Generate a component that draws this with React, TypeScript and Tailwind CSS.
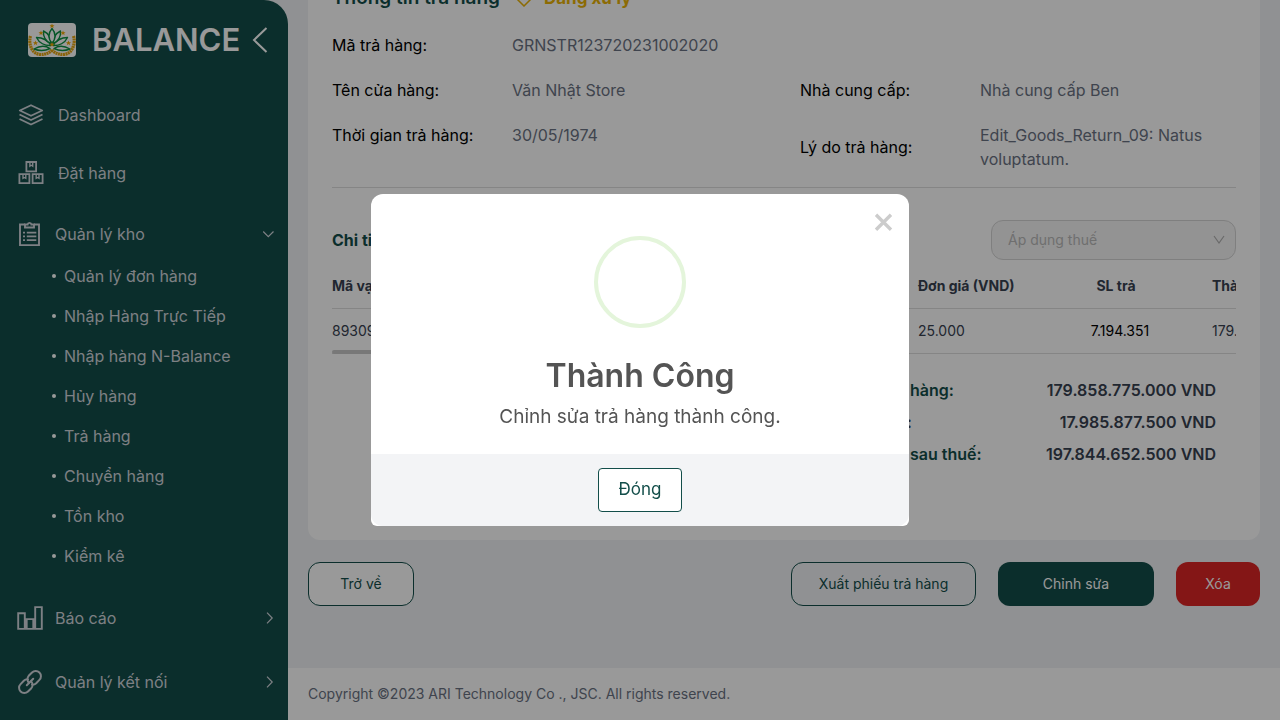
import type { ReactNode } from "react";

const stockLinks = [
  "Quản lý đơn hàng",
  "Nhập Hàng Trực Tiếp",
  "Nhập hàng N-Balance",
  "Hủy hàng",
  "Trả hàng",
  "Chuyển hàng",
  "Tồn kho",
  "Kiểm kê",
];

const totals = [
  { label: "Tổng tiền hàng:", value: "179.858.775.000 VND", tone: "text-[#134e4a]" },
  { label: "Tiền thuế:", value: "17.985.877.500 VND", tone: "text-[#374151]" },
  { label: "Tổng tiền sau thuế:", value: "197.844.652.500 VND", tone: "text-[#134e4a]" },
];

function Star({ x, y }: { x: number; y: number }) {
  return (
    <path
      transform={`translate(${x} ${y})`}
      d="M0-2.6.7-.8 2.5-.8 1.1.4 1.6 2.2 0 1.1-1.6 2.2-1.1.4-2.5-.8-.7-.8Z"
      fill="#f0a800"
    />
  );
}

function Logo() {
  return (
    <svg viewBox="0 0 48 34" className="h-[34px] w-12 shrink-0" aria-hidden="true">
      <rect width="48" height="34" rx="4" fill="#fff" />
      <g fill="none" stroke="#e5a512" strokeWidth="3.200" strokeDasharray="2 .5">
        <path d="M2.500 13C0 21 4 31.500 13 31.500c4.500 0 8-1.500 11-4.500" />
        <path d="M45.500 13c2.500 8-1.500 18.500-10.500 18.500-4.500 0-8-1.500-11-4.500" />
      </g>
      <g fill="#fff" stroke="#0c8f43" strokeWidth="1.4" strokeLinejoin="round">
        <path d="M22 25.500c-5 2.500-11 2.500-16 .5 5-3 11-4 16-.5Z" />
        <path d="M26 25.500c5 2.500 11 2.500 16 .5-5-3-11-4-16-.5Z" />
        <path d="M23 22.500C17 23 11 20 8.500 14.500c6 0 11 2.500 14.500 8Z" />
        <path d="M25 22.500c6 .5 12-2.500 14.500-8-6 0-11 2.500-14.500 8Z" />
        <path d="M23 20.500c-5-2-8-6.500-7.500-12.500 5 2.500 7.500 7 7.500 12.500Z" />
        <path d="M25 20.500c5-2 8-6.500 7.500-12.500-5 2.500-7.500 7-7.500 12.500Z" />
        <path d="M24 20c-4-4-4-10 0-14.500 4 4.500 4 10.500 0 14.500Z" />
      </g>
      <Star x={24} y={3} />
      <Star x={13} y={10} />
      <Star x={35} y={10} />
      <Star x={7.500} y={20} />
      <Star x={40.500} y={20} />
      <Star x={24} y={21.500} />
    </svg>
  );
}

function LayersIcon() {
  return (
    <svg viewBox="0 0 26 26" className="size-[26px]" fill="none" stroke="currentColor" strokeWidth="1.8" strokeLinejoin="round" aria-hidden="true">
      <path d="M13 3.200 24.200 8.500 13 13.800 1.800 8.500Z" />
      <path d="M1.500 12.500 13 18l11.500-5.500" />
      <path d="M1.500 17 13 22.500 24.500 17" />
    </svg>
  );
}

function BoxesIcon() {
  return (
    <svg viewBox="0 0 26 26" className="size-[26px]" fill="none" stroke="currentColor" strokeWidth="1.8" aria-hidden="true">
      <path d="M8.400 2h9.700v9.400H8.400ZM1.400 14.100h10v9h-10ZM14.600 14.100h10v9h-10Z" />
      <path fill="currentColor" stroke="none" d="M11.200 2.500h4.200v5l-2.100-1.400-2.100 1.400ZM4.300 14.600h4.200v5l-2.100-1.400-2.100 1.400ZM17.500 14.600h4.200v5l-2.100-1.400-2.100 1.400Z" />
      <path fill="#134e4a" stroke="none" d="M12.600 2.900h1.400v1.900h-1.400ZM5.700 15h1.400v1.900H5.700ZM18.900 15h1.400v1.900h-1.400Z" />
    </svg>
  );
}

function ClipboardIcon() {
  return (
    <svg viewBox="0 0 24 26" className="h-[26px] w-6" fill="none" stroke="currentColor" strokeWidth="1.9" aria-hidden="true">
      <path d="M8 3.500H3v20.600h19V3.500h-5" />
      <path d="M8 3.500h2.600C10.800 1.300 14.200 1.300 14.400 3.500H17v3H8Z" />
      <path strokeWidth="1.8" d="M6 11.700h2M9.800 11.700h9.500M6 15.400h2M9.800 15.400h9.500M6 19.100h2M9.800 19.100h9.500" />
    </svg>
  );
}

function BarsIcon() {
  return (
    <svg viewBox="0 0 26 26" className="size-[26px]" fill="none" stroke="currentColor" strokeWidth="1.9" aria-hidden="true">
      <path d="M1.200 8.200h6.600v15.700H1.200ZM9.700 14.100h6.600v9.800H9.700ZM18.200 2.100h6.600v21.800h-6.600Z" />
    </svg>
  );
}

function LinkIcon() {
  return (
    <svg viewBox="0 0 26 26" className="size-[26px]" fill="none" stroke="currentColor" strokeWidth="2" strokeLinecap="round" aria-hidden="true">
      <path d="M12 13.800a5.200 5.200 0 0 1-.3-7L15 3.500a5.200 5.200 0 0 1 7.400 7.400l-3.200 3.300a5.200 5.200 0 0 1-4.200 1.400" />
      <path d="M14 12.200a5.200 5.200 0 0 1 .3 7L11 22.500a5.200 5.200 0 0 1-7.400-7.400l3.200-3.300A5.200 5.200 0 0 1 11 10.400" />
      <path d="m9.800 16.200 6.400-6.400" />
    </svg>
  );
}

function Chevron({ className, d }: { className: string; d: string }) {
  return (
    <svg viewBox="0 0 12 12" className={className} fill="none" stroke="currentColor" strokeWidth="1.2" aria-hidden="true">
      <path d={d} />
    </svg>
  );
}

const DOWN = "M.2 3.500 5.300 8.700l5.200-5.200";
const RIGHT = "M4 .7 9.200 6 4 11.300";

function NavGroup({ icon, label, arrow, className }: { icon: ReactNode; label: string; arrow: string; className: string }) {
  return (
    <button type="button" className={`flex h-11 w-full items-center pr-[13px] pl-[17px] text-left ${className}`}>
      <span className="flex w-[38px]">{icon}</span>
      <span className="flex-1">{label}</span>
      <Chevron className="size-3" d={arrow} />
    </button>
  );
}

function Sidebar() {
  return (
    <aside className="h-full w-72 shrink-0 overflow-hidden rounded-tr-3xl bg-[#134e4a] text-gray-300">
      <div className="flex h-20 items-center pl-7 text-white">
        <Logo />
        <span className="ml-4 w-[158px] text-[31px] font-semibold">BALANCE</span>
        <button type="button" aria-label="Thu gọn menu">
          <svg viewBox="0 0 18 28" className="h-7 w-[18px]" fill="none" stroke="currentColor" strokeWidth="2" aria-hidden="true">
            <path d="M16.500 2 4 14l12.500 12" />
          </svg>
        </button>
      </div>
      <nav className="pt-[6px]">
        <a href="#dashboard" className="flex h-[58px] items-center gap-[14px] pl-[18px]">
          <LayersIcon />
          Dashboard
        </a>
        <a href="#orders" className="flex h-[58px] items-center gap-[14px] pl-[18px]">
          <BoxesIcon />
          Đặt hàng
        </a>
        <NavGroup icon={<ClipboardIcon />} label="Quản lý kho" arrow={DOWN} className="mt-[10px]" />
        <ul>
          {stockLinks.map((label) => (
            <li key={label}>
              <a href="#stock" className="flex h-10 items-center gap-2 pl-[52px]">
                <span className="size-1 rounded-full bg-white" />
                {label}
              </a>
            </li>
          ))}
        </ul>
        <NavGroup icon={<BarsIcon />} label="Báo cáo" arrow={RIGHT} className="mt-5" />
        <NavGroup icon={<LinkIcon />} label="Quản lý kết nối" arrow={RIGHT} className="mt-5" />
      </nav>
    </aside>
  );
}

function Field({ label, value }: { label: string; value: string }) {
  return (
    <div className="flex items-center">
      <dt className="w-[180px] shrink-0 text-black">{label}</dt>
      <dd className="text-gray-500">{value}</dd>
    </div>
  );
}

function ReturnCard() {
  return (
    <section className="rounded-xl bg-white px-6 pt-6 pb-[70px]">
      <div className="flex h-6 items-center text-[19px] font-semibold">
        <h2 className="text-[#134e4a]">Thông tin trả hàng</h2>
        <svg viewBox="0 0 16 16" className="mr-3 ml-4 size-4" fill="none" stroke="#eab308" strokeWidth="1.5" aria-hidden="true">
          <path d="M8 1 15 8l-7 7-7-7Z" />
        </svg>
        <span className="text-[17px] font-bold text-[#eab308]">Đang xử lý</span>
      </div>
      <dl className="mt-[22px] grid grid-cols-2 items-start gap-x-8 gap-y-[21px] border-b border-[#dedede] pb-4">
        <div className="col-span-2">
          <Field label="Mã trả hàng:" value="GRNSTR123720231002020" />
        </div>
        <Field label="Tên cửa hàng:" value="Văn Nhật Store" />
        <Field label="Nhà cung cấp:" value="Nhà cung cấp Ben" />
        <Field label="Thời gian trả hàng:" value="30/05/1974" />
        <Field label="Lý do trả hàng:" value="Edit_Goods_Return_09: Natus voluptatum." />
      </dl>
      <div className="mt-8 flex items-center justify-between">
        <h2 className="font-bold text-[#134e4a]">Chi tiết trả hàng</h2>
        <div className="relative w-[245px]">
          <select
            disabled
            aria-label="Áp dụng thuế"
            className="h-10 w-full appearance-none rounded-xl border border-[#d4d4d4] bg-[#f5f5f5] pr-8 pl-4 text-sm text-[#b9b9b9] opacity-100"
          >
            <option>Áp dụng thuế</option>
          </select>
          <Chevron className="pointer-events-none absolute top-[14px] right-[11px] size-3 text-[#b0b0b0]" d="M1 2l5 7 5-7" />
        </div>
      </div>
      <div className="relative mt-1 overflow-hidden text-sm">
        <table className="w-[1060px] table-fixed border-collapse text-left text-[#374151]">
          <colgroup>
            <col className="w-[160px]" />
            <col className="w-[426px]" />
            <col className="w-[122px]" />
            <col className="w-[152px]" />
            <col className="w-[200px]" />
          </colgroup>
          <thead>
            <tr className="h-[45px] border-b border-[#dedede] font-semibold">
              <th>Mã vạch</th>
              <th>Mô tả</th>
              <th>Đơn giá (VND)</th>
              <th className="text-center">SL trả</th>
              <th className="pl-5">Thành tiền</th>
            </tr>
          </thead>
          <tbody>
            <tr className="h-[45px] border-b border-[#dedede]">
              <td>8930974600018</td>
              <td>Sản phẩm</td>
              <td>25.000</td>
              <td className="pl-2 text-center text-black">7.194.351</td>
              <td className="pl-5">179.858.775.000</td>
            </tr>
          </tbody>
        </table>
        <span className="absolute bottom-0 left-0 h-1 w-[400px] rounded-sm bg-[#c8c8c8]" />
      </div>
      <dl className="mt-5 ml-auto w-[402px] pr-5 font-semibold">
        {totals.map((row) => (
          <div key={row.label} className="flex h-8 items-center justify-between">
            <dt className={row.tone}>{row.label}</dt>
            <dd className="text-[#374151]">{row.value}</dd>
          </div>
        ))}
      </dl>
    </section>
  );
}

function SuccessDialog() {
  return (
    <div className="fixed inset-0 flex items-center justify-center bg-black/40">
      <div
        role="dialog"
        aria-modal="true"
        aria-labelledby="dialog-title"
        className="relative w-[538px] overflow-hidden rounded-t-xl rounded-b-md bg-white text-center text-[#545454]"
      >
        <button type="button" aria-label="Đóng hộp thoại" className="absolute top-4 right-4 text-[#ccc]">
          <svg viewBox="0 0 20 24" className="h-6 w-5" stroke="currentColor" strokeWidth="3.400" aria-hidden="true">
            <path d="m3 4.700 15 15M18 4.700l-15 15" />
          </svg>
        </button>
        <div className="mx-auto mt-[42px] size-[92px] rounded-full border-4 border-[#e4f5db]" />
        <h1 id="dialog-title" className="mt-7 text-[32px] leading-10 font-semibold">
          Thành Công
        </h1>
        <p className="mt-[7px] mb-[23px] text-[19px] leading-7">Chỉnh sửa trả hàng thành công.</p>
        <div className="flex h-[72px] items-center justify-center rounded-b-xl bg-[#f3f4f6]">
          <button type="button" className="h-11 w-[84px] rounded border border-[#134e4a] bg-white text-[17px] text-[#134e4a]">
            Đóng
          </button>
        </div>
      </div>
    </div>
  );
}

export default function App() {
  return (
    <div className="flex h-screen overflow-hidden bg-[#f0f2f5] font-['Inter','Noto_Sans',sans-serif] text-base">
      <Sidebar />
      <div className="flex min-w-0 flex-1 flex-col justify-end">
        <main className="px-5">
          <ReturnCard />
          <div className="mt-[22px] mb-[62px] flex gap-[22px] text-sm">
            <button type="button" className="mr-auto h-11 w-[106px] rounded-xl border border-[#134e4a] bg-white text-[#134e4a]">
              Trở về
            </button>
            <button type="button" className="h-11 w-[185px] rounded-xl border border-[#134e4a] text-[#134e4a]">
              Xuất phiếu trả hàng
            </button>
            <button type="button" className="h-11 w-[156px] rounded-xl bg-[#134e4a] text-white">
              Chỉnh sửa
            </button>
            <button type="button" className="h-11 w-[84px] rounded-xl bg-[#dc2626] text-white">
              Xóa
            </button>
          </div>
        </main>
        <footer className="flex h-[52px] shrink-0 items-center bg-white px-5 text-sm text-gray-500">
          Copyright ©2023 ARI Technology Co ., JSC. All rights reserved.
        </footer>
      </div>
      <SuccessDialog />
    </div>
  );
}
